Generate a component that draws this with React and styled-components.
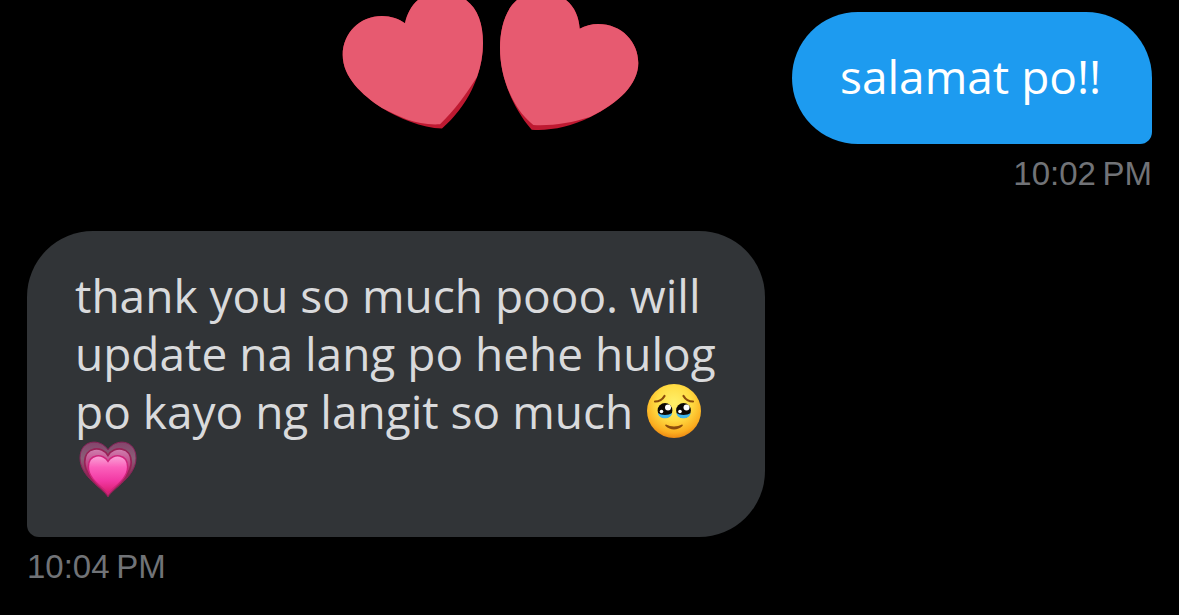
import React from 'react';
import styled, { createGlobalStyle } from 'styled-components';

const GlobalStyle = createGlobalStyle`
  body {
    margin: 0;
    background: #000;
    font-family: "Open Sans", "Noto Sans", sans-serif;
  }
`;

const Chat = styled.main`
  display: flex;
  flex-direction: column;
  gap: 36px;
  padding: 0 27px 28px;
`;

const TopRow = styled.div`
  display: flex;
  justify-content: flex-end;
  align-items: flex-start;
  gap: 152px;
`;

const Hearts = styled.svg`
  display: block;
  flex: none;
  width: 298px;
  height: 131px;
`;

const Message = styled.div`
  display: flex;
  flex-direction: column;
  align-items: ${({ $mine }) => ($mine ? 'flex-end' : 'flex-start')};
  padding-top: ${({ $mine }) => ($mine ? '12px' : '0')};
`;

const Bubble = styled.p`
  box-sizing: border-box;
  min-width: 360px;
  max-width: 738px;
  margin: 0;
  padding: 35px 48px 39px;
  border-radius: ${({ $mine }) => ($mine ? '66px 66px 12px 66px' : '66px 66px 66px 12px')};
  background: ${({ $mine }) => ($mine ? '#1d9bf0' : '#313437')};
  color: ${({ $mine }) => ($mine ? '#fff' : '#d9dadc')};
  font-size: 46px;
  line-height: 58px;
`;

const Time = styled.time`
  margin-top: 9px;
  color: #717377;
  font-family: "Liberation Sans", Arial, sans-serif;
  font-size: 33px;
  line-height: 42px;
`;

const Emoji = styled.svg`
  display: inline-block;
  width: 64px;
  height: 58px;
  vertical-align: top;
`;

function TwoHearts() {
    return (
        <Hearts viewBox="0 0 298 131" role="img" aria-label="two hearts">
            <path fill="#be1931" d="M100 128.5C80 128 56 118 40 108C20 95 .7 77 .7 55C.7 33 18 16 40 16C49 16 57 19 63 23.3C65 14 69 6 76 0C88 -9 114 -9 124 0C136 9 141 24 141 43C141 75 125 107 100 128.5Z" />
            <path fill="#e75a70" d="M98 124.3C86 125 75 123 65 119.5C56 116 48 112 40 108C20 95 .7 77 .7 55C.7 33 18 16 40 16C49 16 57 19 63 23.3C65 14 69 6 76 0C88 -9 114 -9 124 0C136 9 141 24 141 43C141 54 139 66 135 77C125 93 112 111 98 124.3Z" />
            <path fill="#be1931" d="M189.7 129.7C170 107 158 76 158 48C158 29 163 10 175 0C189 -9 213 -9 224 0C233 7 237 18 237.7 28.7C243 26 250 24 256 24C280 24 296.3 42 296.3 63C296.3 84 277 103 248 117.3C228 127 208 131 189.7 129.7Z" />
            <path fill="#e75a70" d="M191.3 125C183 118 176 110 170 98C162 82 158 65 158 48C158 29 163 10 175 0C189 -9 213 -9 224 0C233 7 237 18 237.7 28.7C243 26 250 24 256 24C280 24 296.3 42 296.3 63C296.3 84 277 103 248 117C229 123 210 126 191.3 125Z" />
        </Hearts>
    );
}

function TearyFace() {
    return (
        <Emoji viewBox="2 0 64 58" role="img" aria-label="face holding back tears">
            <defs>
                <radialGradient id="skin" cx=".5" cy=".35" r=".65">
                    <stop offset="0" stopColor="#fff06a" />
                    <stop offset=".5" stopColor="#ffdc43" />
                    <stop offset=".85" stopColor="#fbae20" />
                    <stop offset="1" stopColor="#ec8913" />
                </radialGradient>
            </defs>
            <circle cx="31" cy="29" r="27" fill="url(#skin)" />
            <g fill="none" stroke="#8b4c0c" strokeLinecap="round" strokeWidth="2.2">
                <path d="M12 19.5C16 19.5 19.5 17.5 21.5 14" />
                <path d="M40.5 14C42.5 17.5 46 19.5 50 19.5" />
            </g>
            <path fill="#8b4c0c" d="M23 42.5C28 45 34 45 39 42.5C40 42.5 40 43.5 39.5 44C35 48.5 27 48.5 22.5 44C22 43.5 22 42.5 23 42.5Z" />
            <circle cx="22" cy="28.5" r="7.4" fill="#0c0906" />
            <circle cx="40.5" cy="28.5" r="7.4" fill="#0c0906" />
            <path fill="#3fb4ec" d="M15 31C18 33.5 26 33.5 29 31C28.5 38 15.5 38 15 31Z" />
            <path fill="#3fb4ec" d="M33.5 31C36.5 33.5 44.5 33.5 47.5 31C47 38 34 38 33.5 31Z" />
            <g fill="#fff">
                <circle cx="25" cy="25.5" r="3" />
                <circle cx="18.5" cy="29.5" r="1.8" />
                <circle cx="43.5" cy="25.5" r="3" />
                <circle cx="37" cy="29.5" r="1.8" />
            </g>
        </Emoji>
    );
}

function GrowingHeart() {
    const heart = 'M32 56C27 47 4 36 4 17C4 -2 25 -3 32 9C39 -3 60 -2 60 17C60 36 37 47 32 56Z';

    return (
        <Emoji viewBox="-1 -1 64 58" role="img" aria-label="growing heart">
            <defs>
                <linearGradient id="outer" x1="0" y1="0" x2="0" y2="1">
                    <stop offset="0" stopColor="#85446c" />
                    <stop offset=".3" stopColor="#8a6078" />
                    <stop offset=".6" stopColor="#8e2856" />
                    <stop offset="1" stopColor="#cf1d61" />
                </linearGradient>
                <linearGradient id="middle" x1="0" y1="0" x2="0" y2="1">
                    <stop offset="0" stopColor="#d080b0" />
                    <stop offset=".5" stopColor="#b72b72" />
                    <stop offset="1" stopColor="#d81d68" />
                </linearGradient>
                <linearGradient id="inner" x1="0" y1="0" x2="0" y2="1">
                    <stop offset="0" stopColor="#f9a5d7" />
                    <stop offset=".3" stopColor="#fb60bb" />
                    <stop offset=".65" stopColor="#f239a4" />
                    <stop offset="1" stopColor="#d91b6c" />
                </linearGradient>
            </defs>
            <path d={heart} fill="url(#outer)" stroke="#8b245b" strokeWidth="1" />
            <path d={heart} fill="url(#middle)" stroke="#982257" strokeWidth="2" transform="translate(5.4 7) scale(.83)" />
            <path d={heart} fill="url(#inner)" stroke="#ce247c" strokeWidth="2" transform="translate(9.6 14) scale(.7)" />
        </Emoji>
    );
}

function App() {
    return (
        <>
            <GlobalStyle />
            <Chat>
                <TopRow>
                    <TwoHearts />
                    <Message $mine>
                        <Bubble $mine>salamat po!!</Bubble>
                        <Time>10:02&#8239;PM</Time>
                    </Message>
                </TopRow>
                <Message>
                    <Bubble>
                        thank you so much pooo. will update na lang po hehe hulog po kayo ng langit so much <TearyFace /> <GrowingHeart />
                    </Bubble>
                    <Time>10:04&#8239;PM</Time>
                </Message>
            </Chat>
        </>
    );
}

export default App;
